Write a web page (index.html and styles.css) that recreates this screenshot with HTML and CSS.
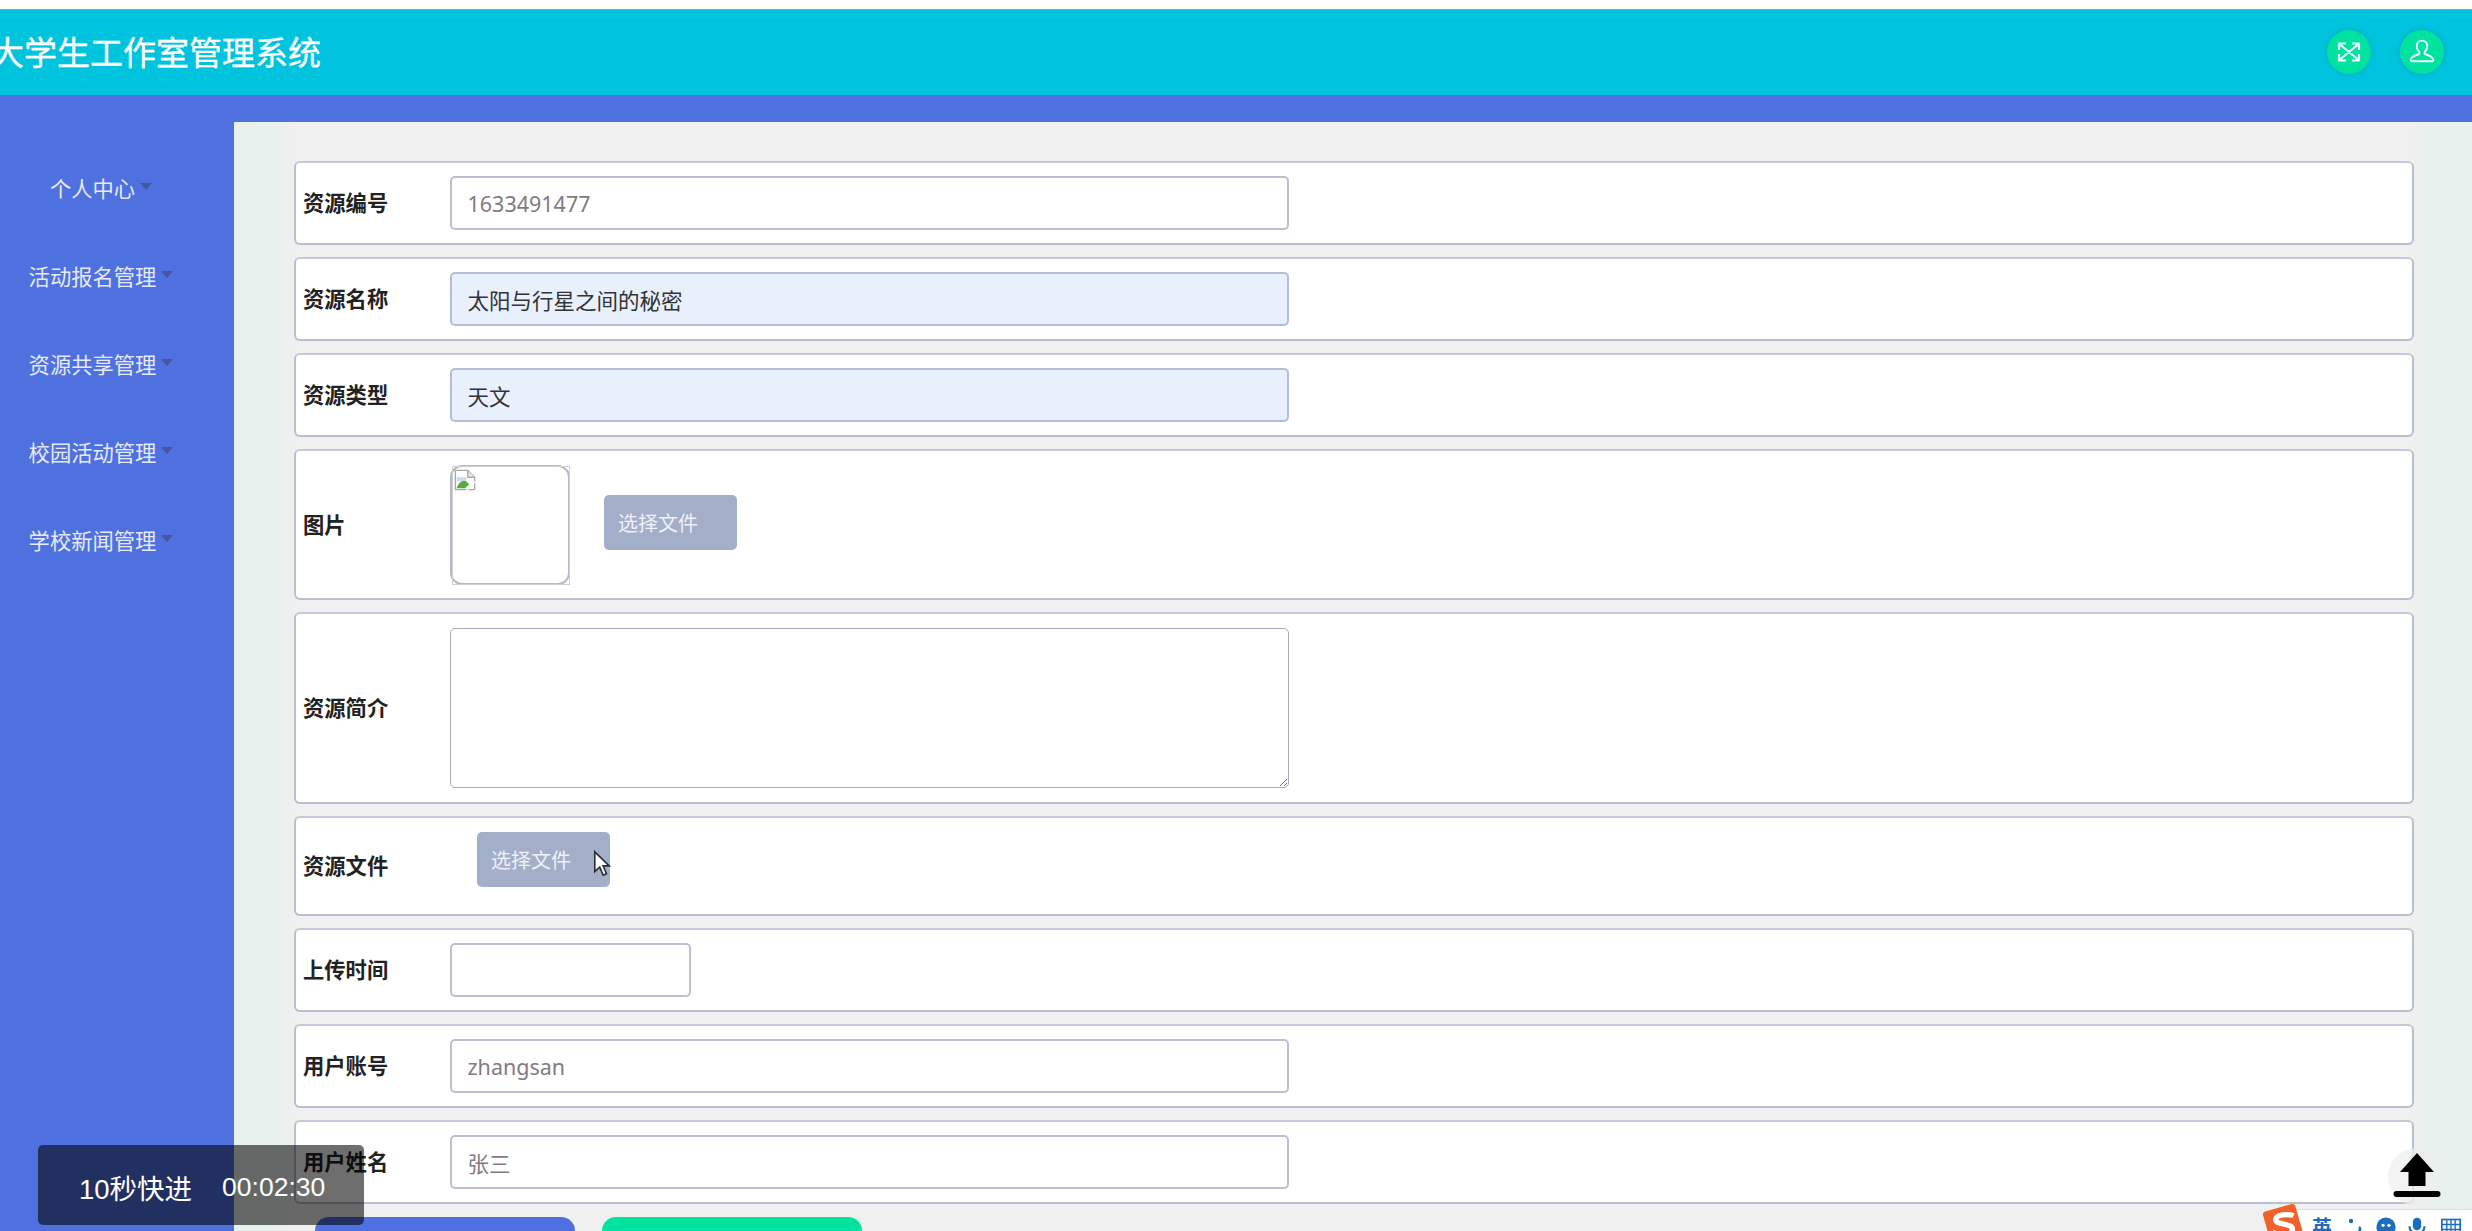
FILE: index.html
```html
<!DOCTYPE html>
<html lang="zh-CN">
<head>
<meta charset="utf-8">
<title>大学生工作室管理系统</title>
<link rel="stylesheet" href="styles.css">
</head>
<body>
<div class="page">
  <header class="topbar">
    <h1 class="brand">大学生工作室管理系统</h1>
    <div class="top-actions">
      <span class="round-btn">
        <svg viewBox="0 0 24 24" class="round-icon icon-expand"><path d="M3 4.500l18 15M21 4.500l-18 15M2 10V3.500h7M15 3.500h7V10M22 14v6.500h-7M9 20.500H2V14"/></svg>
      </span>
      <span class="round-btn">
        <svg viewBox="0 0 24 24" class="round-icon"><path d="M12 1.500c-3 0-4.800 2.300-4.800 5.200 0 2.300.9 4.200 2.300 5.400v1.700c-2.600.8-7.300 2.500-7.900 5-.2 1 .3 1.700 1.200 1.700h18.400c.9 0 1.400-.7 1.200-1.700-.6-2.500-5.300-4.200-7.900-5v-1.700c1.400-1.200 2.300-3.100 2.300-5.400 0-2.900-1.800-5.200-4.800-5.200z"/></svg>
      </span>
    </div>
  </header>
  <div class="shell">
    <nav class="sidebar">
      <a class="nav-item">个人中心<i class="caret"></i></a>
      <a class="nav-item">活动报名管理<i class="caret"></i></a>
      <a class="nav-item">资源共享管理<i class="caret"></i></a>
      <a class="nav-item">校园活动管理<i class="caret"></i></a>
      <a class="nav-item">学校新闻管理<i class="caret"></i></a>
    </nav>
    <main class="content">
      <form class="form">
        <div class="row"><label class="label">资源编号</label><input class="field muted" value="1633491477" readonly></div>
        <div class="row"><label class="label">资源名称</label><input class="field filled" value="太阳与行星之间的秘密"></div>
        <div class="row"><label class="label">资源类型</label><input class="field filled" value="天文"></div>
        <div class="row row-image">
          <label class="label">图片</label>
          <div class="imgbox">
            <svg viewBox="0 0 16 16" class="broken"><path d="M1 1h9l5 5v9H1z" fill="#fff" stroke="#a9a9a9" stroke-width="1"/><path d="M10 1v5h5" fill="#e8e8e8" stroke="#a9a9a9" stroke-width="1"/><path d="M2 6h7v3H2z" fill="#c5d9f5"/><path d="M2 14c1-4 4-6 7-5l2 2-3 3z" fill="#5aa83c"/><path d="M15 9l-6 6" stroke="#fff" stroke-width="2"/></svg>
          </div>
          <button type="button" class="pick pick-image">选择文件</button>
        </div>
        <div class="row row-text"><label class="label">资源简介</label><textarea class="area"></textarea></div>
        <div class="row row-file"><label class="label">资源文件</label><button type="button" class="pick pick-file">选择文件</button></div>
        <div class="row"><label class="label">上传时间</label><input class="field short"></div>
        <div class="row"><label class="label">用户账号</label><input class="field muted" value="zhangsan" readonly></div>
        <div class="row"><label class="label">用户姓名</label><input class="field muted" value="张三" readonly></div>
        <div class="actions">
          <button type="button" class="action action-save" aria-label="提交"></button>
          <button type="button" class="action action-cancel" aria-label="取消"></button>
        </div>
      </form>
    </main>
  </div>

  <div class="toast"><span class="toast-label">10秒快进</span><span>00:02:30</span></div>

  <svg viewBox="0 0 20 30" class="cursor"><path d="M2 2v22l5.500-5 3.800 9 3.700-1.600-3.800-8.800H18z"/></svg>

  <div class="totop">
    <svg viewBox="0 0 48 48" class="totop-icon"><path d="M24 0L41 19H32.500V33H15.500V19H7z"/><rect x="0.500" y="38" width="47" height="6" rx="3"/></svg>
  </div>

  <div class="ime">
    <svg viewBox="0 0 40 40" class="ime-logo"><rect x="4" y="4" width="32" height="32" rx="3" transform="rotate(-16 20 20)" fill="#f0622a"/><path d="M30 12c-5-2-17-1-17 4s16 3 16 9-12 6-19 3" fill="none" stroke="#fff" stroke-width="5"/></svg>
    <span class="ime-word">英</span>
    <svg viewBox="0 0 14 20" class="ime-dots"><circle cx="3" cy="4" r="2.200" fill="#1a6dbf"/><path d="M11 10c1.500 1 1.500 3.500-.5 5" fill="none" stroke="#1a6dbf" stroke-width="2.600"/></svg>
    <svg viewBox="0 0 24 24" class="ime-glyph ime-face"><circle cx="12" cy="12" r="11.500" fill="#1a6dbf"/><circle cx="8.500" cy="10" r="2" fill="#fff"/><circle cx="15.500" cy="10" r="2" fill="#fff"/></svg>
    <svg viewBox="0 0 24 24" class="ime-glyph ime-mic"><rect x="7" y="1" width="10" height="15" rx="5" fill="#1a6dbf"/><path d="M3 11c0 12 18 12 18 0" fill="none" stroke="#1a6dbf" stroke-width="2.500"/></svg>
    <svg viewBox="0 0 24 24" class="ime-glyph ime-keys"><rect x="1" y="3" width="22" height="19" fill="none" stroke="#1a6dbf" stroke-width="2"/><path d="M1 9h22M1 15h22M7 3v19M12 3v19M17 3v19" stroke="#1a6dbf" stroke-width="1.600"/></svg>
  </div>
</div>
</body>
</html>
```
FILE: styles.css
```css
* { box-sizing: border-box; }
html, body { margin: 0; height: 100%; overflow: hidden; background: #fff; }
body { font-family: "Noto Sans", "Noto Sans CJK SC", sans-serif; }
.page { position: relative; height: 1231px; padding-top: 9px; overflow: hidden; display: flex; flex-direction: column; }

.topbar { height: 86px; flex: none; display: flex; align-items: center; justify-content: space-between; background: #00c4de; border-top: 1px solid #3cc5d6; padding-right: 28px; }
.brand { margin: 0 0 0 -9px; font-size: 33px; line-height: 1; font-weight: 400; color: #fff; white-space: nowrap; letter-spacing: 0; -webkit-text-stroke: .3px #fff; }
.top-actions { display: flex; gap: 29px; margin-top: -2px; }
.round-btn { width: 44px; height: 44px; border-radius: 50%; background: #00e29f; box-shadow: 0 0 6px rgba(0, 110, 130, .35); display: flex; align-items: center; justify-content: center; }
.round-icon { width: 26px; height: 26px; fill: none; stroke: #e9fbf6; stroke-width: 1.800; stroke-linejoin: round; }
.icon-expand { width: 24px; height: 24px; stroke-width: 2.200; }

.shell { flex: 1; min-height: 0; display: flex; background: #4f71e0; padding-top: 27px; }
.sidebar { width: 234px; flex: none; padding-top: 21px; }
.nav-item { height: 88px; width: 202px; display: flex; align-items: center; justify-content: center; gap: 5px; font-size: 21.300px; color: #e6eaf8; white-space: nowrap; }
.caret { flex: none; width: 0; height: 0; margin-top: -2px; border-left: 6px solid transparent; border-right: 6px solid transparent; border-top: 7px solid #45589f; }

.content { flex: 1; min-width: 0; padding: 39px 58px 0 60px; background: linear-gradient(90deg, #e8f1ed 0, #e8f1ed 40px, #eff0ef 60px, #eff0ef calc(100% - 60px), #e8f1ed calc(100% - 40px), #e8f1ed 100%); }
.form { display: flex; flex-direction: column; gap: 12px; }
.row { height: 84px; flex: none; display: flex; align-items: center; background: #fff; border: 2px solid #b8bfd2; border-top-color: #c3c9da; border-radius: 6px; padding-left: 7px; }
.row-image { height: 151px; }
.row-text { height: 192px; }
.row-file { height: 100px; }
.label { width: 146.500px; flex: none; padding-bottom: 3px; font-size: 21.300px; font-weight: 700; color: #222; }

.field { width: 839px; height: 54px; padding: 0 16px; border: 2px solid #bcbfcf; border-radius: 5px; background: #fff; font: 21.500px "Noto Sans", "Noto Sans CJK SC", sans-serif; color: #333; outline: none; }
.muted { color: #857884; }
.filled { background: #e8f0fe; border-color: #b3bdd6; }
.short { width: 241px; }
.area { width: 839px; height: 160px; border: 1px solid #a4a9bc; border-radius: 5px; background: #fff; outline: none; }

.imgbox { position: relative; width: 120px; height: 120px; border: 2px solid #b5bacb; border-radius: 12px; background: #fff; padding: 2px; }
.imgbox::after { content: ""; position: absolute; inset: -1px -2px -2px 0; border: 1px solid #cfcfcf; }
.broken { display: block; width: 22px; height: 22px; }
.pick { height: 55px; width: 133px; padding: 0 0 0 14px; text-align: left; border: none; border-radius: 5px; background: #a3afc8; color: #eef1f7; font: 20px "Noto Sans CJK SC", sans-serif; }
.pick-image { margin-left: 34.500px; margin-top: -5px; }
.pick-file { margin-left: 27.500px; margin-top: -13px; }

.actions { display: flex; gap: 27px; margin-top: 1px; padding-left: 21px; }
.action { width: 260px; height: 60px; border: none; border-radius: 14px; }
.action-save { background: #4f71e0; }
.action-cancel { background: #00e29f; }

.toast { position: absolute; left: 38px; top: 1145px; width: 326px; height: 80px; border-radius: 5px; background: rgba(0, 0, 0, .57); color: #fff; font: 26.500px "Liberation Sans", "Noto Sans CJK SC", sans-serif; display: flex; align-items: center; gap: 30px; padding: 4px 0 0 41px; white-space: nowrap; }
.toast-label { font-size: 27.500px; }
.cursor { position: absolute; left: 593px; top: 850px; width: 18px; height: 27px; fill: #fff; stroke: #2a2f3a; stroke-width: 1.800; }
.totop { position: absolute; left: 2388px; top: 1148px; width: 58px; height: 58px; border-radius: 50%; background: rgba(236, 238, 238, .7); display: flex; align-items: center; justify-content: center; }
.totop-icon { width: 48px; height: 48px; fill: #000; }
.ime { position: absolute; left: 2262px; top: 1203px; width: 210px; height: 60px; display: flex; align-items: flex-start; }
.ime::before { content: ""; position: absolute; left: 33px; right: 0; top: 6px; bottom: 0; background: #fff; border-top: 1px solid #d7dde4; }
.ime-logo { position: relative; width: 42px; height: 42px; flex: none; }
.ime-word { position: relative; font: 700 20px/1 "Noto Sans CJK SC", sans-serif; color: #1a6dbf; margin: 14px 0 0 8px; }
.ime-dots { position: relative; width: 14px; height: 20px; flex: none; margin: 14px 0 0 16px; }
.ime-glyph { position: relative; width: 20px; height: 20px; margin-top: 14px; flex: none; }
.ime-face { margin-left: 14px; }
.ime-mic { margin-left: 11px; }
.ime-keys { margin-left: 14px; }
```
